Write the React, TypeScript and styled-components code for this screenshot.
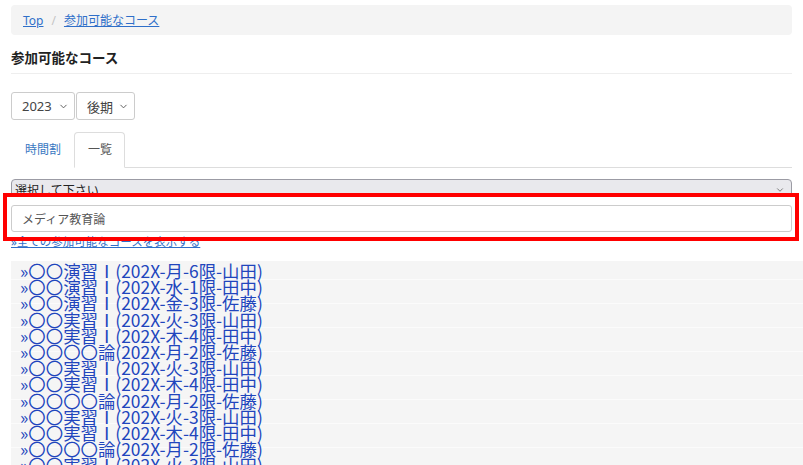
import styled, { createGlobalStyle } from "styled-components";
import { ChevronDown } from "lucide-react";

const GlobalStyle = createGlobalStyle`
  html, body {
    margin: 0;
    overflow: hidden;
    background: #fff;
  }
  body {
    font-family: "Noto Sans", "Noto Sans CJK JP", sans-serif;
    color: #333;
  }
`;

const Page = styled.div`
  padding: 5px 11px 0;
  height: 465px;
  box-sizing: border-box;
  overflow: hidden;
`;

const Breadcrumb = styled.nav`
  display: flex;
  align-items: center;
  gap: 8px;
  height: 30px;
  padding: 0 12px;
  background: #f4f4f4;
  border-radius: 4px;
  font-size: 12px;
`;

const Crumb = styled.a`
  color: #2f6fc9;
  text-decoration: underline;
  cursor: pointer;
`;

const Sep = styled.span`
  color: #c4c4c4;
`;

const Title = styled.h2`
  margin: 12px 0 0;
  padding-bottom: 4px;
  border-bottom: 1px solid #eee;
  font-size: 13.5px;
  line-height: 22px;
  font-weight: 700;
  color: #222;
`;

const TermRow = styled.div`
  display: flex;
  gap: 1px;
  margin-top: 18px;
`;

const TermSelect = styled.div<{ $width: number }>`
  display: flex;
  align-items: center;
  justify-content: space-between;
  box-sizing: border-box;
  width: ${(p) => p.$width}px;
  height: 28px;
  padding: 0 5px 0 10px;
  border: 1px solid #ccc;
  border-radius: 3px;
  font-size: 13px;
  color: #444;
`;

const Tabs = styled.div`
  display: flex;
  margin-top: 12px;
  border-bottom: 1px solid #ddd;
`;

const Tab = styled.div<{ $active?: boolean }>`
  height: 34px;
  line-height: 34px;
  padding: 0 12px 0 13px;
  margin-bottom: -1px;
  font-size: 12px;
  border: 1px solid ${(p) => (p.$active ? "#ddd" : "transparent")};
  border-bottom-color: transparent;
  border-radius: 4px 4px 0 0;
  background: #fff;
  color: ${(p) => (p.$active ? "#555" : "#3a78c2")};
`;

const Combo = styled.div`
  position: relative;
  margin-top: 11px;
`;

const CourseSelect = styled.div`
  display: flex;
  align-items: center;
  justify-content: space-between;
  box-sizing: border-box;
  height: 22px;
  padding: 0 6px 0 3px;
  background: #e9e9ed;
  border: 1px solid #9b9ba4;
  border-radius: 4px;
  font-size: 12px;
  color: #222;
`;

const DropPanel = styled.div`
  position: relative;
  margin-top: -4px;
  padding: 8px 0 3px;
  background: #fff;
`;

const SearchBox = styled.div`
  display: flex;
  align-items: center;
  box-sizing: border-box;
  height: 27px;
  padding-left: 10px;
  border: 1px solid #ccc;
  border-radius: 3px;
  font-size: 12px;
  color: #555;
`;

const Highlight = styled.div`
  position: absolute;
  top: 14px;
  left: -8px;
  right: -7px;
  height: 48px;
  box-sizing: border-box;
  border: 4px solid #ff0000;
  pointer-events: none;
`;

const AllLink = styled.a`
  display: block;
  font-size: 11.5px;
  line-height: 13px;
  color: #2f6fc9;
  text-decoration: underline;
`;

const CourseList = styled.div`
  margin: 13px -11px 0 0;
  padding: 2px 0 0 9px;
  height: 220px;
  background: repeating-linear-gradient(
    to bottom,
    #f5f5f5 0,
    #f5f5f5 23px,
    #fbfbfb 23px,
    #fbfbfb 24px
  );
  background-position: 0 -5px;
`;

const CourseRow = styled.div`
  font-family: "Noto Sans CJK JP", sans-serif;
  font-size: 17.4px;
  line-height: 16.2px;
  color: #2145bd;
  white-space: nowrap;
`;

const courses = [
  "〇〇演習Ⅰ(202X-月-6限-山田)",
  "〇〇演習Ⅰ(202X-水-1限-田中)",
  "〇〇演習Ⅰ(202X-金-3限-佐藤)",
  "〇〇実習Ⅰ(202X-火-3限-山田)",
  "〇〇実習Ⅰ(202X-木-4限-田中)",
  "〇〇〇〇論(202X-月-2限-佐藤)",
  "〇〇実習Ⅰ(202X-火-3限-山田)",
  "〇〇実習Ⅰ(202X-木-4限-田中)",
  "〇〇〇〇論(202X-月-2限-佐藤)",
  "〇〇実習Ⅰ(202X-火-3限-山田)",
  "〇〇実習Ⅰ(202X-木-4限-田中)",
  "〇〇〇〇論(202X-月-2限-佐藤)",
  "〇〇実習Ⅰ(202X-火-3限-山田)",
];

function App() {
  return (
    <>
      <GlobalStyle />
      <Page>
        <Breadcrumb>
          <Crumb>Top</Crumb>
          <Sep>/</Sep>
          <Crumb>参加可能なコース</Crumb>
        </Breadcrumb>

        <Title>参加可能なコース</Title>

        <TermRow>
          <TermSelect $width={64}>
            2023
            <ChevronDown size={11} color="#555" />
          </TermSelect>
          <TermSelect $width={59}>
            後期
            <ChevronDown size={11} color="#555" />
          </TermSelect>
        </TermRow>

        <Tabs>
          <Tab>時間割</Tab>
          <Tab $active>一覧</Tab>
        </Tabs>

        <Combo>
          <CourseSelect>
            選択して下さい
            <ChevronDown size={10} color="#666" />
          </CourseSelect>
          <DropPanel>
            <SearchBox>メディア教育論</SearchBox>
          </DropPanel>
          <Highlight />
        </Combo>

        <AllLink>»全ての参加可能なコースを表示する</AllLink>

        <CourseList>
          {courses.map((c, i) => (
            <CourseRow key={i}>»{c}</CourseRow>
          ))}
        </CourseList>
      </Page>
    </>
  );
}

export default App;
